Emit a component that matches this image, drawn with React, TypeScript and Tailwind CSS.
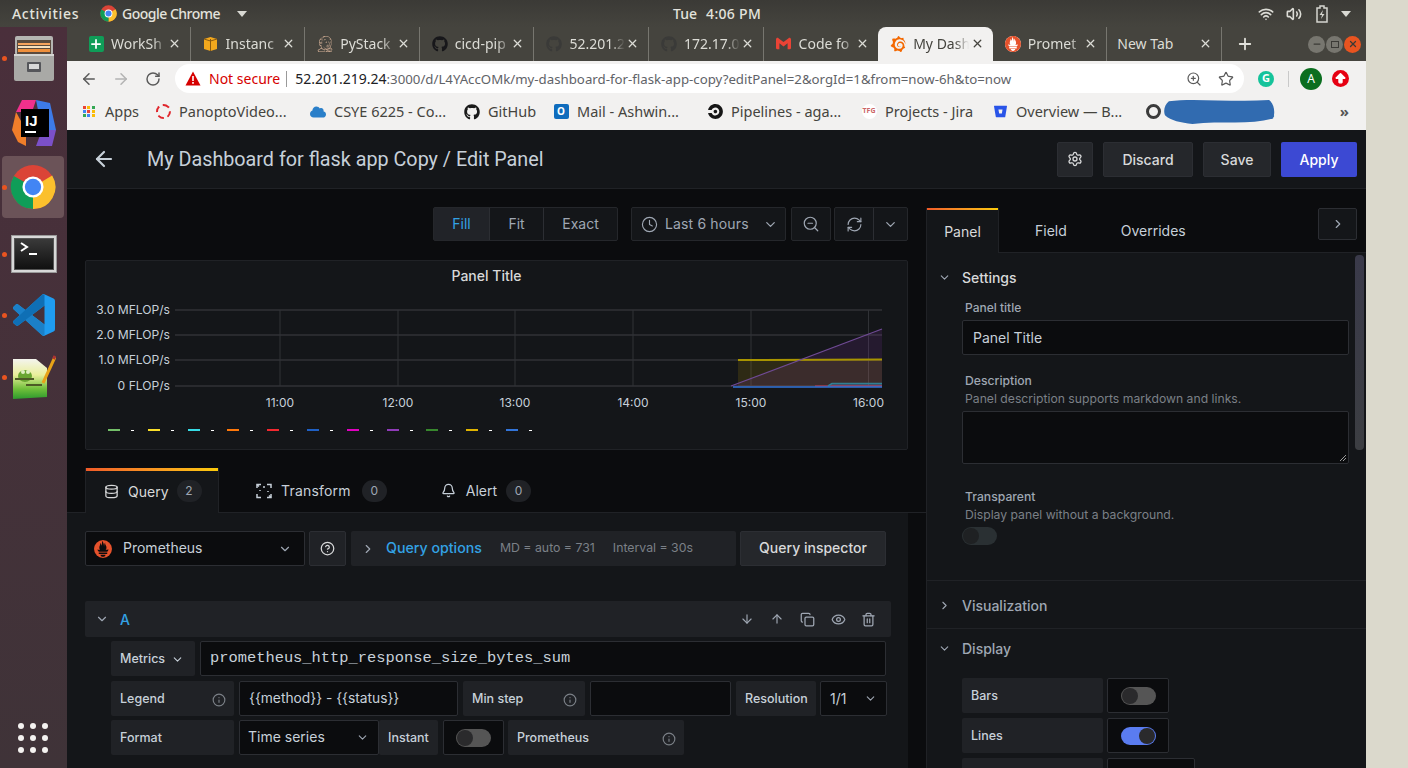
import React from "react";
import { ArrowLeft, ArrowRight, RotateCw, ZoomIn, Star, ChevronDown, ChevronRight, Settings, Clock, ZoomOut, RefreshCw, Database, Bell, HelpCircle, Info, ArrowDown, ArrowUp, Copy, Eye, Trash2, Plus, X, Minus, Wifi, Volume2, ArrowBigUp } from "lucide-react";
import { SiGrafana, SiPrometheus, SiBitbucket, SiJenkins, SiGmail, SiCircleci } from "react-icons/si";
import { FaGithub, FaCloud } from "react-icons/fa";

const inter = "font-['Inter',sans-serif]";

function ChromeLogo({ size }: { size: number }) {
  return (
    <svg width={size} height={size} viewBox="0 0 48 48">
      <circle cx="24" cy="24" r="23" fill="#db4437" />
      <path d="M24 24 L44 12 A23 23 0 0 1 24 47 Z" fill="#fbc02d" />
      <path d="M24 24 L24 47 A23 23 0 0 1 4 12.5 Z" fill="#0f9d58" />
      <circle cx="24" cy="24" r="11" fill="#fff" />
      <circle cx="24" cy="24" r="8.5" fill="#4285f4" />
    </svg>
  );
}

function DockItem({ dot, className, children }: { dot?: boolean; className: string; children: React.ReactNode }) {
  return (
    <div className={`relative flex items-center justify-center shrink-0 w-[67px] ${className}`}>
      {dot && <span className="absolute left-[2px] top-1/2 -mt-[2.5px] w-[5px] h-[5px] rounded-full bg-[#e95420]" />}
      {children}
    </div>
  );
}

function Dock() {
  return (
    <div className="w-[67px] shrink-0 flex flex-col bg-gradient-to-b from-[#4a2f3b] to-[#3f3338]">
      <DockItem dot className="h-[45px] mt-[9px]">
        <svg width="42" height="45" viewBox="0 0 42 45">
          <rect x="2" y="0" width="38" height="19" rx="2" fill="#b5b5b2" />
          <rect x="4" y="4" width="34" height="14" fill="#5b4a3d" />
          <rect x="5" y="7" width="32" height="2" fill="#f7a35c" />
          <rect x="5" y="10" width="32" height="2" fill="#f9e0bd" />
          <rect x="5" y="13" width="32" height="3" fill="#ef8f3c" />
          <rect x="1" y="18" width="40" height="27" rx="2" fill="#a9a9a6" />
          <rect x="1" y="18" width="40" height="2" fill="#d5d5d2" />
          <rect x="14" y="26" width="14" height="10" rx="1" fill="#55565a" />
          <rect x="16" y="28" width="10" height="5" fill="#d8d8d8" />
        </svg>
      </DockItem>
      <DockItem className="h-[46px] mt-[19px]">
        <svg width="44" height="46" viewBox="0 0 44 46">
          <polygon points="10,0 24,0 20,12 4,12" fill="#f0308c" />
          <polygon points="24,0 38,3 44,30 30,30" fill="#3d7be8" />
          <polygon points="0,30 4,12 14,30 14,46 6,42" fill="#f07e2a" />
          <polygon points="30,30 44,30 40,46 24,46" fill="#7b50c8" />
          <rect x="9" y="9" width="28" height="28" fill="#000" />
          <text x="13" y="26" fontSize="15" fontWeight="700" fill="#fff" fontFamily="'Liberation Sans',sans-serif">IJ</text>
          <rect x="13" y="31" width="11" height="2" fill="#fff" />
        </svg>
      </DockItem>
      <DockItem dot className="h-[62px] mt-[10px]">
        <div className="-ml-[1px] w-[62px] h-[62px] rounded-[4px] bg-[#6b5358] flex items-center justify-center">
          <ChromeLogo size={46} />
        </div>
      </DockItem>
      <DockItem dot className="h-[38px] mt-[17px]">
        <div className="w-[46px] h-[38px] bg-[#d8d8d8] p-[3px] shadow-[inset_0_0_0_1px_#999]">
          <div className="w-full h-full bg-gradient-to-b from-[#3a3a3a] to-[#111] border border-[#555] flex items-start pl-[5px] pt-[3px] gap-[2px]">
            <svg width="18" height="14" viewBox="0 0 18 14">
              <path d="M1 1 L7 5 L1 9" stroke="#fff" strokeWidth="2" fill="none" />
              <rect x="9" y="11" width="8" height="2" fill="#fff" />
            </svg>
          </div>
        </div>
      </DockItem>
      <DockItem dot className="h-[42px] mt-[21px]">
        <svg width="42" height="42" viewBox="0 0 100 100">
          <path fillRule="evenodd" d="M70.9 99.3a6.2 6.2 0 0 0 5-.2l20.6-9.9a6.2 6.2 0 0 0 3.5-5.6V16.4a6.2 6.2 0 0 0-3.5-5.6L75.9.9a6.2 6.2 0 0 0-7.1 1.2L29.4 38 12.2 25a4.2 4.2 0 0 0-5.3.2L1.4 30.3a4.2 4.2 0 0 0 0 6.2L16.3 50 1.4 63.5a4.2 4.2 0 0 0 0 6.2l5.5 5a4.2 4.2 0 0 0 5.3.2L29.4 62l39.4 35.9a6.2 6.2 0 0 0 2.1 1.4ZM75 27.3 45.1 50 75 72.7Z" fill="#1f9cf0" />
          <path d="M75 100 L69 98 L1.4 36.5 a4.2 4.2 0 0 1 0-6.2 L6.9 25.2 a4.2 4.2 0 0 1 5.3-.2 L75 72.7 Z" fill="#1b80c8" />
          <path d="M75 0.5 L69 2 L1.4 63.5 a4.2 4.2 0 0 0 0 6.2 L6.9 74.7 a4.2 4.2 0 0 0 5.3.2 L75 27.3 Z" fill="#0f6fb5" />
        </svg>
      </DockItem>
      <DockItem dot className="h-[45px] mt-[19px]">
        <svg width="44" height="45" viewBox="0 0 44 45">
          <defs>
            <linearGradient id="npp" x1="0" y1="0" x2="0" y2="1">
              <stop offset="0" stopColor="#f4f4ee" />
              <stop offset="0.4" stopColor="#e9ef9a" />
              <stop offset="0.75" stopColor="#6fbf3a" />
              <stop offset="1" stopColor="#2d9a2d" />
            </linearGradient>
          </defs>
          <polygon points="1,4 24,4 35,13 35,42 1,44" fill="url(#npp)" />
          <ellipse cx="13" cy="21" rx="7" ry="6" fill="#6aa632" />
          <circle cx="11" cy="17" r="2" fill="#dff0c0" />
          <circle cx="16" cy="17" r="2" fill="#dff0c0" />
          <path d="M3 24 H22 M14 30 H30" stroke="#4d5a25" strokeWidth="2" />
          <path d="M31 28 L43 2" stroke="#e8a317" strokeWidth="3" />
          <path d="M41.5 4 L43 1" stroke="#a33" strokeWidth="3" />
        </svg>
      </DockItem>
      <div className="mt-auto mb-[15px] ml-[18px] grid grid-cols-3 gap-x-[6px] gap-y-[6px] w-[30px]">
        {Array.from({ length: 9 }).map((_, i) => (
          <span key={i} className="w-[6px] h-[6px] rounded-full bg-[#f4f2f0]" />
        ))}
      </div>
    </div>
  );
}

function TopBar() {
  return (
    <div className="h-[27px] shrink-0 flex items-center bg-gradient-to-b from-[#3b3a36] to-[#45443e] text-[#e3e3dd] text-[14px] font-['Noto_Sans',sans-serif] font-medium">
      <span className="ml-[12px] w-[88px] tracking-[0.7px]">Activities</span>
      <ChromeLogo size={17} />
      <span className="ml-[5px] tracking-[-0.5px]">Google Chrome</span>
      <span className="ml-[17px] w-0 h-0 border-x-[5px] border-x-transparent border-t-[6px] border-t-[#d9d9d3]" />
      <span className="ml-[426px]">Tue</span>
      <span className="ml-[9px] tracking-[0.3px]">4:06 PM</span>
      <div className="ml-auto flex items-center mr-[15px] text-[#dcdcd6]">
        <Wifi size={16} strokeWidth={2.4} />
        <Volume2 size={16} strokeWidth={2.4} className="ml-[12px]" />
        <svg width="12" height="18" viewBox="0 0 12 18" className="ml-[14px]">
          <path d="M4 1 H8 V3 H11 V17 H1 V3 H4 Z" fill="none" stroke="#d5d5cf" strokeWidth="1.5" />
          <path d="M7 5 L3.5 10 H6 L5 14 L8.5 9 H6 Z" fill="#d5d5cf" />
        </svg>
        <span className="ml-[13px] w-0 h-0 border-x-[5px] border-x-transparent border-t-[6px] border-t-[#d9d9d3]" />
      </div>
    </div>
  );
}

type TabDef = { label: string; icon: React.ReactNode; active?: boolean; sep?: boolean };

function Tab({ label, icon, active, sep }: TabDef) {
  return (
    <div className={`relative w-[114.6px] shrink-0 h-[34px] flex items-center pl-[12px] pr-[9px] pb-[1px] ${active ? "bg-[#f2f1f0] rounded-t-[8px] text-[#45443e]" : "text-[#dcdcd6]"} ${sep ? "border-r border-[#77766f]" : ""}`}>
      <span className="w-[16px] h-[16px] flex items-center justify-center shrink-0">{icon}</span>
      <span className="ml-[7px] w-[56px] overflow-hidden whitespace-nowrap text-[14px] [mask-image:linear-gradient(to_right,black_75%,transparent)]">{label}</span>
      <X size={13} strokeWidth={2.4} className="ml-auto" />
    </div>
  );
}

function TabBar() {
  const tabs: TabDef[] = [
    { label: "WorkSh", sep: true, icon: <span className="w-[15px] h-[16px] rounded-[2px] bg-[#0f9d58] flex items-center justify-center"><Plus size={14} strokeWidth={3} color="#fff" /></span> },
    { label: "Instanc", sep: true, icon: <svg width="15" height="16" viewBox="0 0 15 16"><path d="M1 3 L7.5 1 L14 3 V13 L7.5 15 L1 13 Z" fill="#f2a81d" /><path d="M7.5 3 V15 M1 3 L7.5 5 L14 3" stroke="#8a5a10" fill="none" /></svg> },
    { label: "PyStack", sep: true, icon: <SiJenkins size={16} color="#d9b49a" /> },
    { label: "cicd-pip", sep: true, icon: <FaGithub size={16} color="#17171a" /> },
    { label: "52.201.2", sep: true, icon: <FaGithub size={16} color="#3a3a38" /> },
    { label: "172.17.0", sep: true, icon: <FaGithub size={16} color="#3a3a38" /> },
    { label: "Code fo", icon: <SiGmail size={15} color="#ea4335" /> },
    { label: "My Dash", active: true, icon: <SiGrafana size={16} color="#f46800" /> },
    { label: "Promet", sep: true, icon: <span className="w-[16px] h-[16px] rounded-full bg-white flex items-center justify-center"><SiPrometheus size={16} color="#e6522c" /></span> },
  ];
  return (
    <div className="h-[34px] shrink-0 flex items-center bg-[#45443e] font-['Noto_Sans',sans-serif]">
      <div className="ml-[9px] flex items-center">
        {tabs.map((t) => <Tab key={t.label} {...t} />)}
        <div className="w-[114.6px] shrink-0 h-[34px] flex items-center pl-[10px] pr-[9px] pb-[1px] text-[#dcdcd6] text-[14px] border-r border-[#77766f]">
          <span>New Tab</span>
          <X size={13} strokeWidth={2.4} className="ml-auto" />
        </div>
      </div>
      <Plus size={18} strokeWidth={2.4} className="ml-[14px] text-[#e2e2dc]" />
      <div className="ml-auto mr-[5px] flex items-center gap-[1px]">
        <span className="w-[17px] h-[17px] rounded-full bg-[#77766f] flex items-center justify-center"><Minus size={10} strokeWidth={3} color="#3b3a36" /></span>
        <span className="w-[17px] h-[17px] rounded-full bg-[#77766f] flex items-center justify-center"><span className="w-[8px] h-[7px] border border-[#3b3a36]" /></span>
        <span className="w-[17px] h-[17px] rounded-full bg-[#e95420] flex items-center justify-center"><X size={10} strokeWidth={3} color="#3b3a36" /></span>
      </div>
    </div>
  );
}

function Toolbar() {
  return (
    <div className="h-[35px] shrink-0 flex items-center bg-[#f2f1f0] text-[#5b5b5b] font-['Noto_Sans',sans-serif]">
      <ArrowLeft size={18} strokeWidth={2} className="ml-[13px] text-[#5a5a5a]" />
      <ArrowRight size={18} strokeWidth={2} className="ml-[14px] text-[#b3b3b3]" />
      <RotateCw size={16} strokeWidth={2.2} className="ml-[15px] text-[#5a5a5a]" />
      <div className="ml-[14px] w-[1069px] h-[29px] rounded-full bg-white flex items-center">
        <svg width="16" height="15" viewBox="0 0 16 15" className="ml-[10px]"><path d="M8 0.5 L15.5 14.5 H0.5 Z" fill="#d60000" /><rect x="7.2" y="5" width="1.6" height="5" fill="#fff" /><rect x="7.2" y="11" width="1.6" height="1.8" fill="#fff" /></svg>
        <span className="ml-[8px] text-[14px] text-[#d60000]">Not secure</span>
        <span className="ml-[6px] h-[16px] border-l border-[#9a9a9a]" />
        <span className="ml-[8px] text-[13.26px] whitespace-nowrap text-[#5f6368]"><span className="text-[14px] text-[#202124]">52.201.219.24</span>:3000/d/L4YAccOMk/my-dashboard-for-flask-app-copy?editPanel=2&amp;orgId=1&amp;from=now-6h&amp;to=now</span>
        <ZoomIn size={16} strokeWidth={1.8} className="ml-auto text-[#5a5a5a]" />
        <Star size={16} strokeWidth={1.8} className="ml-[16px] mr-[10px] text-[#5a5a5a]" />
      </div>
      <span className="ml-[14px] w-[16px] h-[16px] rounded-full bg-[#15c39a] flex items-center justify-center text-white text-[11px] font-bold">G</span>
      <span className="ml-[14px] h-[16px] border-l border-[#c9c9c9]" />
      <span className="ml-[11px] w-[22px] h-[22px] rounded-full bg-[#0b6e1f] flex items-center justify-center text-white text-[12px]">A</span>
      <span className="ml-[10px] w-[17px] h-[17px] rounded-full bg-[#e60012] flex items-center justify-center"><ArrowBigUp size={13} fill="#fff" color="#fff" /></span>
    </div>
  );
}

function Bookmark({ icon, label, className }: { icon: React.ReactNode; label: string; className: string }) {
  return (
    <div className={`flex items-center whitespace-nowrap ${className}`}>
      <span className="w-[16px] h-[16px] flex items-center justify-center shrink-0">{icon}</span>
      <span className="ml-[8px] text-[14.5px] text-[#45443e]">{label}</span>
    </div>
  );
}

function Bookmarks() {
  const colors = ["#ea4335", "#fbbc05", "#34a853", "#4285f4", "#ea4335", "#fbbc05", "#34a853", "#4285f4", "#fbbc05"];
  return (
    <div className="relative h-[34px] shrink-0 flex items-center pb-[3px] bg-[#f2f1f0] font-['Noto_Sans',sans-serif]">
      <Bookmark className="ml-[14px] w-[74px]" label="Apps" icon={<span className="grid grid-cols-3 gap-[1px] w-[12px]">{colors.map((c, i) => <span key={i} className="w-[3px] h-[3px]" style={{ background: c }} />)}</span>} />
      <Bookmark className="w-[155px]" label="PanoptoVideo..." icon={<span className="w-[15px] h-[15px] rounded-full border-2 border-dashed border-[#e0252b]" />} />
      <Bookmark className="w-[154px]" label="CSYE 6225 - Co..." icon={<FaCloud size={16} color="#2a7fc9" />} />
      <Bookmark className="w-[89px]" label="GitHub" icon={<FaGithub size={16} color="#1a1a1a" />} />
      <Bookmark className="w-[154px]" label="Mail - Ashwin..." icon={<span className="w-[15px] h-[15px] bg-[#0f6cbd] rounded-[2px] text-white text-[10px] font-bold flex items-center justify-center">O</span>} />
      <Bookmark className="w-[154px]" label="Pipelines - aga..." icon={<SiCircleci size={15} color="#161616" />} />
      <Bookmark className="w-[131px]" label="Projects - Jira" icon={<span className="w-[15px] h-[15px] rounded-full bg-white text-[7px] font-bold text-[#c66] flex items-center justify-center">TFG</span>} />
      <Bookmark className="w-[152px]" label="Overview — B..." icon={<SiBitbucket size={13} color="#2954e8" />} />
      <span className="ml-[2px] w-[15px] h-[15px] rounded-full border-[3px] border-[#3b3b3b]" />
      <span className="ml-[110px] text-[14px] text-[#45443e]">.</span>
      <svg width="113" height="26" viewBox="0 0 115 24" preserveAspectRatio="none" className="absolute left-[1096px] top-[3px]">
        <path d="M6 2 C30 -1 70 3 108 1 C114 5 114 14 112 18 C90 24 60 20 30 23 C18 22 8 20 2 15 C0 10 2 5 6 2 Z" fill="#316bb0" />
      </svg>
      <span className="ml-auto mr-[17px] text-[15px] font-bold text-[#555]">»</span>
    </div>
  );
}

function PlainButton({ children, className }: { children: React.ReactNode; className: string }) {
  return <div className={`h-[35px] flex items-center justify-center rounded-[2px] bg-[#25272b] border border-[#2c2e33] text-[14px] font-medium text-[#d8d9da] ${className}`}>{children}</div>;
}

function GrafanaHeader() {
  return (
    <div className="h-[59px] shrink-0 flex items-center bg-[#141619] border-b border-[#202226]">
      <ArrowLeft size={24} strokeWidth={2.2} className="ml-[25px] text-[#c7d0d9]" />
      <span className="ml-[31px] pt-[2px] text-[19.75px] font-['Roboto',sans-serif] text-[#c7d0d9] whitespace-nowrap">My Dashboard for flask app Copy / Edit Panel</span>
      <PlainButton className="ml-auto w-[36px]"><Settings size={16} /></PlainButton>
      <PlainButton className="ml-[10px] w-[90px]">Discard</PlainButton>
      <PlainButton className="ml-[10px] w-[68px]">Save</PlainButton>
      <div className="ml-[10px] mr-[9px] w-[76px] h-[35px] flex items-center justify-center rounded-[2px] bg-[#3c49d3] text-[14px] font-medium text-white">Apply</div>
    </div>
  );
}

function ToolGroup({ className, children }: { className: string; children: React.ReactNode }) {
  return <div className={`h-[34px] flex items-center rounded-[2px] bg-[#141619] border border-[#25272b] text-[14px] text-[#9fa7b3] ${className}`}>{children}</div>;
}

function ViewToolbar() {
  return (
    <div className="h-[34px] shrink-0 mt-[18px] flex items-center justify-end mr-[18px]">
      <ToolGroup className="w-[185px]">
        <span className="w-[56px] h-full flex items-center justify-center pb-[2px] bg-[#212328] text-[#33a2e5] border-r border-[#2c2e33]">Fill</span>
        <span className="w-[54px] h-full flex items-center justify-center pb-[2px] border-r border-[#2c2e33]">Fit</span>
        <span className="flex-1 text-center pb-[2px]">Exact</span>
      </ToolGroup>
      <ToolGroup className="ml-[13px] w-[155px]">
        <Clock size={17} strokeWidth={1.6} className="ml-[9px]" />
        <span className="ml-[7px] pb-[2px] whitespace-nowrap tracking-[0.15px]">Last 6 hours</span>
        <ChevronDown size={15} className="ml-auto mr-[7px]" />
      </ToolGroup>
      <ToolGroup className="ml-[5px] w-[40px] justify-center"><ZoomOut size={18} strokeWidth={1.6} /></ToolGroup>
      <ToolGroup className="ml-[3px] w-[74px]">
        <span className="w-[39px] h-full flex items-center justify-center border-r border-[#2c2e33]"><RefreshCw size={17} strokeWidth={1.6} /></span>
        <span className="flex-1 flex justify-center"><ChevronDown size={15} /></span>
      </ToolGroup>
    </div>
  );
}

function Chart() {
  const ys: [number, string][] = [[310, "3.0 MFLOP/s"], [335, "2.0 MFLOP/s"], [360, "1.0 MFLOP/s"], [386, "0 FLOP/s"]];
  const xs: [number, string][] = [[280, "11:00"], [398, "12:00"], [515, "13:00"], [633, "14:00"], [751, "15:00"], [868.5, "16:00"]];
  return (
    <svg width="821" height="129" viewBox="86 291 821 129" className="block shrink-0">
      {ys.map(([y, l]) => (
        <g key={l}>
          <line x1="175" x2="882" y1={y} y2={y} stroke="#303236" strokeWidth="1.5" />
          <text x="170" y={y + 4} textAnchor="end" fontSize="12.1" fill="#c7d0d9" fontFamily="Inter, sans-serif">{l}</text>
        </g>
      ))}
      {xs.map(([x, l]) => (
        <g key={l}>
          <line x1={x} x2={x} y1="310" y2="386" stroke="#303236" />
          <text x={x} y="406.5" textAnchor="middle" fontSize="12" fill="#c7d0d9" fontFamily="Inter, sans-serif">{l}</text>
        </g>
      ))}
      <polygon points="738,360 882,359 882,386 738,386" fill="#e0b400" fillOpacity="0.13" />
      <polygon points="731,386 882,329 882,386" fill="#8f3bb8" fillOpacity="0.14" />
      <polygon points="830,384 836,383 882,383 882,387 830,387" fill="#5794f2" fillOpacity="0.25" />
      <line x1="738" y1="360" x2="882" y2="359.5" stroke="#a89400" strokeWidth="2" />
      <line x1="731" y1="386" x2="882" y2="329" stroke="#6f4a94" strokeWidth="1.2" />
      <path d="M815 386 H882" stroke="#c83a5a" strokeWidth="1" />
      <path d="M828 386 L832 383.5 H882" stroke="#2f7f95" strokeWidth="1.5" fill="none" />
      <path d="M733 387 H882" stroke="#3274d9" strokeWidth="1.5" />
    </svg>
  );
}

function GraphPanel() {
  const colors = ["#73bf69", "#fade2a", "#37dbe5", "#ff780a", "#f2282f", "#1f60c4", "#e000c0", "#8f3bb8", "#37872d", "#e0b400", "#3274d9"];
  return (
    <div className="shrink-0 mt-[19px] ml-[18px] w-[823px] h-[190px] rounded-[2px] bg-[#141619] border border-[#202226] flex flex-col">
      <div className="h-[30px] shrink-0 flex items-center justify-center pr-[20px] pb-[2px] text-[14px] font-medium text-[#d8d9da]">Panel Title</div>
      <Chart />
      <div className="h-[20px] flex items-center ml-[22px]">
        {colors.map((c, i) => (
          <div key={i} className="w-[39.8px] shrink-0 flex items-center">
            <span className="w-[12px] h-[2px]" style={{ background: c }} />
            <span className="ml-[11px] w-[3px] h-[1px] bg-white" />
          </div>
        ))}
      </div>
    </div>
  );
}

function TransformIcon() {
  return (
    <svg width="16" height="16" viewBox="0 0 16 16" fill="none" stroke="#c7d0d9" strokeWidth="1.5">
      <path d="M1 5 V1.5 H5 M11 1.5 H15 V5 M15 11 V14.5 H11 M5 14.5 H1 V11" />
      <path d="M3 3.5 L1 1.5 M13 12.5 L15 14.5 M7 4 H9 M4 8 V7 M12 8 V9" />
    </svg>
  );
}

function Count({ v, ml }: { v: string; ml: string }) {
  return <span className={`w-[25px] h-[22px] rounded-full bg-[#202226] text-[12px] text-[#9fa7b3] flex items-center justify-center ${ml}`}>{v}</span>;
}

function QueryTabs() {
  return (
    <div className="h-[45px] shrink-0 mt-[18px] flex border-b border-[#202226] text-[14px]">
      <div className="ml-[18px] w-[134px] h-[45px] flex flex-col bg-[#141619] border-x border-[#202226]">
        <div className="h-[3px] shrink-0 bg-gradient-to-r from-[#f05a28] to-[#fbca0a]" />
        <div className="flex-1 flex items-center pb-[2px] text-[#d8d9da]">
          <Database size={15} className="ml-[18px]" />
          <span className="ml-[9px]">Query</span>
          <Count v="2" ml="ml-[8px]" />
        </div>
      </div>
      <div className="flex items-center pt-[1px] text-[#c7d0d9] ml-[37px]">
        <TransformIcon />
        <span className="ml-[9px] tracking-[0.2px]">Transform</span>
        <Count v="0" ml="ml-[11px]" />
      </div>
      <div className="flex items-center pt-[1px] text-[#c7d0d9] ml-[54px]">
        <Bell size={15} />
        <span className="ml-[10px]">Alert</span>
        <Count v="0" ml="ml-[9px]" />
      </div>
    </div>
  );
}

function Label({ w, children, ml }: { w: string; children: React.ReactNode; ml?: string }) {
  return <div className={`h-[35px] shrink-0 flex items-center pl-[9px] pr-[8px] pt-[2px] rounded-[2px] bg-[#202226] text-[12.5px] font-medium text-[#c7d0d9] ${w} ${ml ?? ""}`}>{children}</div>;
}

function Field({ w, children, ml, mono }: { w: string; children?: React.ReactNode; ml?: string; mono?: boolean }) {
  return <div className={`h-[35px] shrink-0 flex items-center px-[9px] rounded-[2px] bg-[#0b0c0e] border border-[#2c2e33] text-[#c7d0d9] whitespace-nowrap ${mono ? "text-[15.4px] font-['Liberation_Mono',monospace]" : "text-[14px]"} ${w} ${ml ?? ""}`}>{children}</div>;
}

function QueryArea() {
  return (
    <div className="flex-1 min-h-0 w-[841px] bg-[#141619] overflow-hidden">
      <div className="mt-[18px] ml-[18px] flex items-center h-[35px]">
        <div className="w-[220px] h-[35px] flex items-center rounded-[2px] bg-[#0b0c0e] border border-[#2c2e33] text-[14px] text-[#c7d0d9]">
          <span className="ml-[8px] w-[18px] h-[18px] rounded-full bg-[#e6522c] flex items-center justify-center"><SiPrometheus size={18} color="#e6522c" className="bg-[#0b0c0e] rounded-full" /></span>
          <span className="ml-[11px] pb-[2px]">Prometheus</span>
          <ChevronDown size={14} className="ml-auto mr-[12px] text-[#9fa7b3]" />
        </div>
        <div className="ml-[4px] w-[37px] h-[35px] flex items-center justify-center rounded-[2px] bg-[#202226] border border-[#2c2e33] text-[#d8d9da]"><HelpCircle size={15} /></div>
        <div className="ml-[5px] w-[385px] h-[35px] flex items-center rounded-[2px] bg-[#202226]">
          <ChevronRight size={14} className="ml-[10px] text-[#9fa7b3]" />
          <span className="ml-[11px] pb-[2px] text-[14.2px] font-medium text-[#33a2e5]">Query options</span>
          <span className="ml-[18px] text-[12.3px] text-[#7b8087]">MD = auto = 731</span>
          <span className="ml-[18px] text-[12.3px] text-[#7b8087]">Interval = 30s</span>
        </div>
        <PlainButton className="ml-[4px] w-[146px] pb-[2px]">Query inspector</PlainButton>
      </div>
      <div className="mt-[35px] ml-[18px] w-[806px] h-[36px] flex items-center rounded-[2px] bg-[#202226] text-[#9fa7b3]">
        <ChevronDown size={14} className="ml-[10px]" />
        <span className="ml-[11px] text-[14px] font-medium text-[#33a2e5]">A</span>
        <ArrowDown size={14} className="ml-auto" />
        <ArrowUp size={14} className="ml-[16px]" />
        <Copy size={15} className="ml-[16px]" />
        <Eye size={15} className="ml-[16px]" />
        <Trash2 size={15} className="ml-[15px] mr-[15px]" />
      </div>
      <div className="mt-[4px] ml-[44px] flex">
        <Label w="w-[84px]">Metrics<ChevronDown size={13} className="ml-[6px]" /></Label>
        <Field w="w-[686px]" ml="ml-[5px]" mono>prometheus_http_response_size_bytes_sum</Field>
      </div>
      <div className="mt-[5px] ml-[44px] flex">
        <Label w="w-[123px] justify-between">Legend<Info size={14} className="text-[#7b8087]" /></Label>
        <Field w="w-[219px]" ml="ml-[5px]"><span className="text-[13.8px]">{"{{method}} - {{status}}"}</span></Field>
        <Label w="w-[122px] justify-between" ml="ml-[5px]">Min step<Info size={14} className="text-[#7b8087]" /></Label>
        <Field w="w-[141px]" ml="ml-[5px]" />
        <Label w="w-[80px]" ml="ml-[5px]">Resolution</Label>
        <Field w="w-[67px]" ml="ml-[4px]">1/1<ChevronDown size={13} className="ml-auto text-[#9fa7b3]" /></Field>
      </div>
      <div className="mt-[4px] ml-[44px] flex">
        <Label w="w-[123px]">Format</Label>
        <Field w="w-[140px]" ml="ml-[5px]"><span className="-ml-[1px] pb-[2px]">Time series</span><ChevronDown size={13} className="ml-auto text-[#9fa7b3]" /></Field>
        <Label w="w-[59px]">Instant</Label>
        <div className="ml-[5px] w-[61px] h-[35px] shrink-0 flex items-center justify-center rounded-[2px] bg-[#0b0c0e] border border-[#2c2e33]"><Toggle /></div>
        <Label w="w-[176px] justify-between" ml="ml-[4px]">Prometheus<Info size={14} className="text-[#7b8087]" /></Label>
      </div>
    </div>
  );
}

function Toggle({ on }: { on?: boolean }) {
  return (
    <span className={`w-[35px] h-[18px] rounded-full flex items-center px-[1px] ${on ? "bg-[#5a7cf0] justify-end" : "bg-[#555555]"}`}>
      <span className="w-[16px] h-[16px] rounded-full bg-[#2a2a2c]" />
    </span>
  );
}

function LeftColumn() {
  return (
    <div className="w-[859px] shrink-0 flex flex-col min-h-0">
      <ViewToolbar />
      <GraphPanel />
      <QueryTabs />
      <QueryArea />
    </div>
  );
}

function RightColumn() {
  const inputBox = "ml-[35px] w-[387px] shrink-0 rounded-[2px] bg-[#0b0c0e] border border-[#2c2e33]";
  return (
    <div className="relative flex-1 min-w-0 flex flex-col min-h-0 overflow-hidden">
      <div className="h-[45px] shrink-0 mt-[19px] flex border-b border-[#202226] text-[14px] text-[#c7d0d9]">
        <div className="w-[73px] h-[45px] flex flex-col bg-[#141619] border-x border-[#202226]">
          <div className="h-[2px] shrink-0 bg-gradient-to-r from-[#f05a28] to-[#fbca0a]" />
          <div className="flex-1 flex items-center justify-center pb-[1px] text-[#d8d9da]">Panel</div>
        </div>
        <span className="ml-[36px] flex items-center">Field</span>
        <span className="ml-[54px] flex items-center">Overrides</span>
        <div className="ml-auto mr-[9px] w-[39px] h-[32px] flex items-center justify-center rounded-[2px] bg-[#141619] border border-[#2c2e33] text-[#9fa7b3]"><ChevronRight size={14} /></div>
      </div>
      <div className="flex-1 min-h-0 bg-[#141619] border-l border-[#202226] flex flex-col overflow-hidden">
        <div className="h-[49px] shrink-0 flex items-center text-[14px] font-medium text-[#d8d9da]">
          <ChevronDown size={13} className="ml-[11px] text-[#9fa7b3]" />
          <span className="ml-[11px]">Settings</span>
        </div>
        <div className="-mt-[2px] ml-[38px] text-[12px] font-medium text-[#9fa7b3] leading-[16px]">Panel title</div>
        <div className={`mt-[4px] h-[35px] flex items-center px-[10px] text-[14px] text-[#c7d0d9] ${inputBox}`}>Panel Title</div>
        <div className="mt-[17px] ml-[38px] text-[12.2px] font-medium text-[#9fa7b3] leading-[18px]">Description</div>
        <div className="ml-[38px] text-[12.2px] text-[#7b8087] leading-[18px]">Panel description supports markdown and links.</div>
        <div className={`relative mt-[3px] h-[53px] ${inputBox}`}>
          <svg width="8" height="8" viewBox="0 0 8 8" className="absolute right-[1px] bottom-[1px]"><path d="M1 7 L7 1 M4 7 L7 4" stroke="#9a9a9a" strokeWidth="1" /></svg>
        </div>
        <div className="mt-[24px] ml-[38px] text-[12.2px] font-medium text-[#9fa7b3] leading-[18px]">Transparent</div>
        <div className="ml-[38px] text-[12.2px] text-[#7b8087] leading-[18px]">Display panel without a background.</div>
        <div className="mt-[3px] ml-[35px] w-[35px] h-[18px] shrink-0 rounded-full bg-[#2a3033] flex items-center px-[1px]">
          <span className="w-[16px] h-[16px] rounded-full bg-[#1f2123]" />
        </div>
        <div className="mt-[35px] h-[49px] shrink-0 flex items-center pt-[2px] border-y border-[#202226] text-[14px] font-medium text-[#9fa7b3]">
          <ChevronRight size={13} className="ml-[11px]" />
          <span className="ml-[11px]">Visualization</span>
        </div>
        <div className="h-[49px] shrink-0 flex items-center pb-[11px] text-[14px] font-medium text-[#9fa7b3]">
          <ChevronDown size={13} className="ml-[11px]" />
          <span className="ml-[11px]">Display</span>
        </div>
        {[["Bars", false], ["Lines", true]].map(([l, on]) => (
          <div key={l as string} className="ml-[35px] mb-[5px] flex shrink-0">
            <Label w="w-[141px]">{l as string}</Label>
            <div className="ml-[4px] w-[62px] h-[35px] flex items-center justify-center rounded-[2px] bg-[#0b0c0e] border border-[#2c2e33]"><Toggle on={on as boolean} /></div>
          </div>
        ))}
        <div className="ml-[35px] flex shrink-0">
          <Label w="w-[141px]">{""}</Label>
          <div className="ml-[4px] w-[88px] h-[35px] rounded-[2px] bg-[#0b0c0e] border border-[#2c2e33]" />
        </div>
      </div>
      <div className="absolute right-[2px] top-[66px] w-[9px] h-[195px] rounded-[4px] bg-gradient-to-b from-[#3a3a4a] to-[#3c3e42]" />
    </div>
  );
}

export default function App() {
  return (
    <div className="w-[1408px] h-[768px] flex overflow-hidden bg-[#dbd9cc]">
      <div className="w-[1366px] h-full flex flex-col shrink-0">
        <TopBar />
        <div className="flex-1 min-h-0 flex">
          <Dock />
          <div className="flex-1 min-w-0 flex flex-col">
            <TabBar />
            <Toolbar />
            <Bookmarks />
            <div className={`flex-1 min-h-0 flex flex-col bg-[#0b0c0e] ${inter}`}>
              <GrafanaHeader />
              <div className="flex-1 min-h-0 flex">
                <LeftColumn />
                <RightColumn />
              </div>
            </div>
          </div>
        </div>
      </div>
    </div>
  );
}
